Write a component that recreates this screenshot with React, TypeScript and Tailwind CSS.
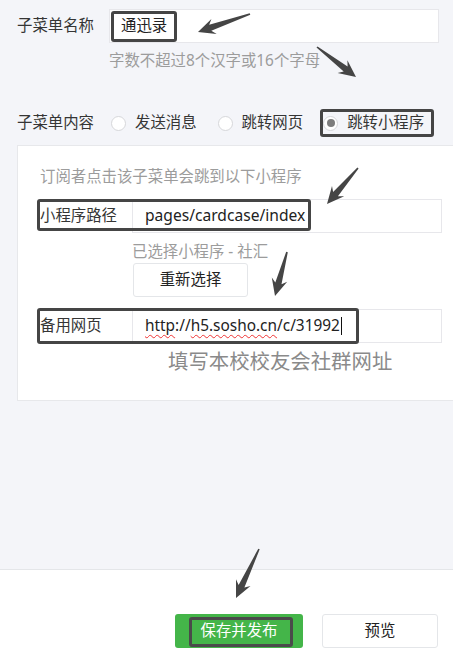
import React from "react";

type Pt = [number, number];

function arrowPoints(tail: Pt, tip: Pt): string {
  const dx = tip[0] - tail[0];
  const dy = tip[1] - tail[1];
  const L = Math.hypot(dx, dy);
  const ux = dx / L;
  const uy = dy / L;
  const nx = -uy;
  const ny = ux;
  const at = (d: number, w: number): string =>
    `${(tail[0] + ux * d + nx * w).toFixed(1)},${(tail[1] + uy * d + ny * w).toFixed(1)}`;
  const neck = L - 13;
  const barb = L - 17;
  return [
    at(0, 0.8),
    at(neck, 3.2),
    at(barb, 8),
    at(L, 0),
    at(barb, -8),
    at(neck, -3.2),
    at(0, -0.8),
  ].join(" ");
}

const arrows: [Pt, Pt][] = [
  [[250, 14], [198, 32]],
  [[317, 47], [356, 77]],
  [[358, 168], [327, 204]],
  [[287, 252], [275, 296]],
  [[259, 549], [236, 598]],
];

function Radio({ checked }: { checked?: boolean }) {
  return (
    <div className="w-[15px] h-[15px] rounded-full border border-[#d6d7da] bg-white flex items-center justify-center shrink-0">
      {checked ? <div className="w-[8px] h-[8px] rounded-full bg-[#7d7d7d]" /> : null}
    </div>
  );
}

export default function App() {
  return (
    <div className="relative w-full h-[652px] bg-[#f4f5f9] flex flex-col overflow-hidden font-['Noto_Sans','Noto_Sans_CJK_SC',sans-serif] text-[#353535]">
      {/* 子菜单名称 */}
      <div className="flex items-center mt-[9px] pl-[17px]">
        <div className="w-[92px] text-[15.4px] leading-[20px]">子菜单名称</div>
        <div className="relative w-[330px] h-[34px] bg-white border border-[#e7e7eb] flex items-center">
          <span className="pl-[11px] text-[15.4px] leading-[20px] text-[#222]">通迅录</span>
          <div className="absolute left-[1px] top-[1px] w-[66px] h-[31px] border-[3px] border-[#454545] rounded-[3px]" />
        </div>
      </div>
      <div className="mt-[8px] ml-[109px] text-[15.4px] leading-[20px] text-[#9c9c9c]">
        字数不超过8个汉字或16个字母
      </div>

      {/* 子菜单内容 */}
      <div className="flex items-center h-[28px] mt-[38px] pl-[17px] text-[15.4px] leading-[20px]">
        <div className="w-[92px]">子菜单内容</div>
        <div className="ml-[2px] flex items-center">
          <Radio />
          <span className="ml-[9px]">发送消息</span>
        </div>
        <div className="ml-[21px] flex items-center">
          <Radio />
          <span className="ml-[9px]">跳转网页</span>
        </div>
        <div className="ml-[17px] h-[28px] w-[114px] border-[3px] border-[#454545] rounded-[3px] flex items-center">
          <Radio checked />
          <span className="ml-[9px]">跳转小程序</span>
        </div>
      </div>

      {/* panel */}
      <div className="mt-[8px] ml-[17px] w-[440px] bg-white border border-[#e7e8eb] pl-[22px] pt-[21px] pb-[27px]">
        <div className="text-[15.4px] leading-[20px] text-[#9c9c9c]">订阅者点击该子菜单会跳到以下小程序</div>

        <div className="relative flex items-center h-[34px] mt-[12px]">
          <div className="w-[92px] text-[15.4px] leading-[20px]">小程序路径</div>
          <div className="w-[310px] h-[34px] border border-[#e7e7eb] bg-white flex items-center pl-[12px] text-[15.6px] text-[#222]">
            pages/cardcase/index
          </div>
          <div className="absolute left-[-3px] top-0 w-[274px] h-[32px] border-[3px] border-[#454545] rounded-[3px]" />
        </div>

        <div className="mt-[9px] ml-[92px] text-[15.4px] leading-[20px] text-[#9c9c9c]">已选择小程序 - 社汇</div>
        <div className="mt-[1px] ml-[93px] w-[115px] h-[34px] border border-[#e4e6e9] rounded-[3px] bg-white flex items-center justify-center text-[15.4px] text-[#222]">
          重新选择
        </div>

        <div className="relative flex items-center h-[34px] mt-[12px]">
          <div className="w-[92px] text-[15.4px] leading-[20px]">备用网页</div>
          <div className="w-[310px] h-[34px] border border-[#e7e7eb] bg-white flex items-center pl-[12px] text-[15.4px] text-[#222]">
            <span className="underline decoration-wavy decoration-[#e33] decoration-1 underline-offset-[3px]">http</span>
            <span>://</span>
            <span className="underline decoration-wavy decoration-[#e33] decoration-1 underline-offset-[3px]">h5.sosho.cn</span>
            <span>/c/31992</span>
            <span className="w-[1px] h-[18px] bg-[#111] ml-[1px]" />
          </div>
          <div className="absolute left-[-3px] top-[-1px] w-[322px] h-[36px] border-[3px] border-[#454545] rounded-[3px]" />
        </div>

        <div className="mt-[6px] ml-[128px] text-[20.4px] leading-[24px] text-[#8a8a8a]">填写本校校友会社群网址</div>
      </div>

      {/* bottom bar */}
      <div className="mt-auto h-[83px] border-t border-[#e4e6e9] bg-white flex justify-end items-start pt-[44px] pr-[15px] gap-[19px]">
        <div className="relative w-[128px] h-[34px] bg-[#44b549] rounded-[3px] flex items-center justify-center text-[15.4px] text-white">
          保存并发布
          <div className="absolute left-[14px] top-[3px] w-[104px] h-[30px] border-[3px] border-[#4a4a4a] rounded-[3px]" />
        </div>
        <div className="w-[116px] h-[34px] border border-[#e4e6e9] rounded-[3px] bg-white flex items-center justify-center text-[15.4px] text-[#222]">
          预览
        </div>
      </div>

      {/* annotation arrows */}
      <svg className="absolute left-0 top-0 pointer-events-none" width="453" height="652" viewBox="0 0 453 652">
        {arrows.map(([a, b], i) => (
          <polygon key={i} points={arrowPoints(a, b)} fill="#454545" />
        ))}
      </svg>
    </div>
  );
}
